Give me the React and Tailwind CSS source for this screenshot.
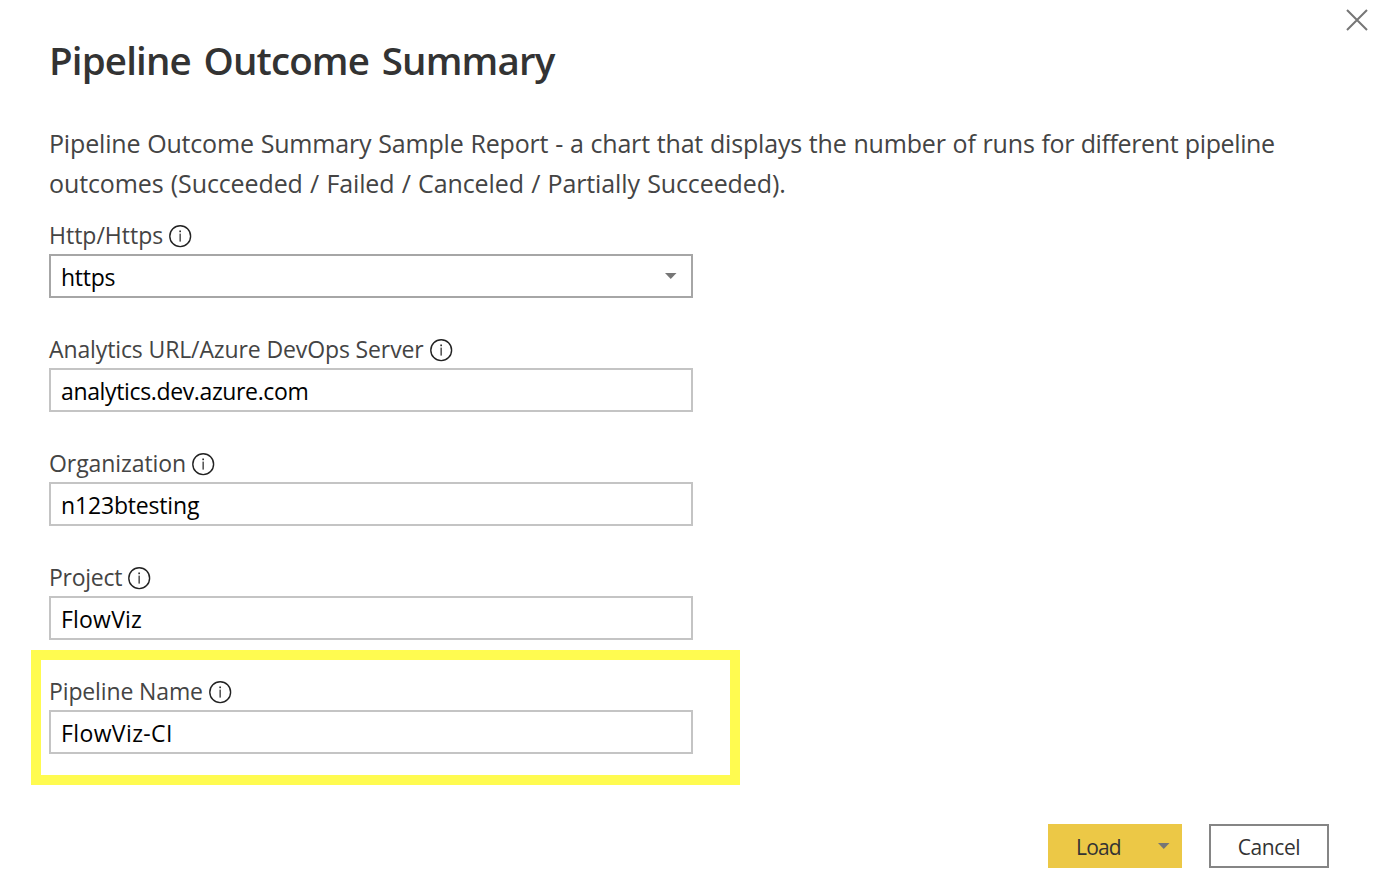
import React from "react";

function InfoIcon() {
  return (
    <svg width="24" height="24" viewBox="0 0 24 24" fill="none" className="shrink-0">
      <circle cx="12.2" cy="12.2" r="10.4" stroke="#222222" strokeWidth="1.4" />
      <rect x="11.5" y="9.6" width="1.3" height="8" fill="#333333" />
      <rect x="11.3" y="6.5" width="1.7" height="1.7" fill="#333333" />
    </svg>
  );
}

function Caret() {
  return (
    <svg width="12" height="6" viewBox="0 0 12 6" className="shrink-0">
      <path d="M0 0H11.5L5.75 6Z" fill="#767676" />
    </svg>
  );
}

function Field({ label, value, select, highlighted, labelClass = "", valueClass = "" }) {
  return (
    <div className="relative flex h-[114px] w-[644px] flex-col">
      {highlighted && (
        <div className="absolute -left-[18px] -top-[33px] h-[135px] w-[709px] border-[10px] border-[#fffb50]" />
      )}
      <div className="flex h-[18px] items-center gap-[5px] whitespace-nowrap text-[23px] text-[#444444]">
        <span className={`relative -top-px ${labelClass}`}>{label}</span>
        <InfoIcon />
      </div>
      <div
        className={`mt-[9px] flex h-11 items-center justify-between border-2 pl-[10px] pr-[14px] text-[23px] text-black ${
          select ? "border-[#a6a6a6]" : "border-[#c4c4c4]"
        }`}
      >
        <span className={`relative top-px ${valueClass}`}>{value}</span>
        {select && <Caret />}
      </div>
    </div>
  );
}

export default function App() {
  return (
    <div className="flex h-[892px] w-[1384px] flex-col overflow-hidden bg-white font-['Open_Sans','Noto_Sans',sans-serif]">
      <header className="flex h-[123px] justify-between pl-[49px] pr-4">
        <h1 className="mt-[33px] whitespace-nowrap text-[38.5px] font-semibold leading-[54px] tracking-[-0.85px] text-[#333333] [word-spacing:3.5px]">
          Pipeline Outcome Summary
        </h1>
        <button aria-label="Close" className="mt-[9px] h-[22px] w-[22px]">
          <svg width="22" height="22" viewBox="0 0 22 22" fill="none">
            <path d="M1 1L21 21M21 1L1 21" stroke="#767676" strokeWidth="2" />
          </svg>
        </button>
      </header>
      <p className="h-[104px] whitespace-nowrap pl-[49px] text-[25px] leading-10 text-[#444444]">
        <span className="tracking-[-0.17px] [word-spacing:0.5px]">Pipeline Outcome Summary Sample Report - a chart that displays the number of runs </span>
        <span className="tracking-[-0.38px] [word-spacing:0.5px]">for different pipeline</span>
        <br />
        <span className="tracking-[-0.11px] [word-spacing:0.9px]">outcomes (Succeeded / Failed / Canceled / Partially Succeeded).</span>
      </p>
      <main className="flex h-[597px] flex-col pl-[49px]">
        <Field label="Http/Https" value="https" valueClass="tracking-[-0.25px]" select />
        <Field
          label="Analytics URL/Azure DevOps Server"
          value="analytics.dev.azure.com"
          labelClass="tracking-[-0.12px]"
          valueClass="tracking-[-0.36px]"
        />
        <Field
          label="Organization"
          value="n123btesting"
          labelClass="tracking-[-0.08px]"
          valueClass="tracking-[-0.17px]"
        />
        <Field label="Project" value="FlowViz" labelClass="tracking-[-0.28px]" valueClass="tracking-[0.2px]" />
        <Field
          label="Pipeline Name"
          value="FlowViz-CI"
          labelClass="tracking-[-0.13px]"
          valueClass="tracking-[0.38px]"
          highlighted
        />
      </main>
      <footer className="flex justify-end gap-[27px] pr-[55px] text-[21px] text-[#333333]">
        <button className="flex h-11 w-[134px] items-center justify-between bg-[#ecc846] pl-7 pr-3">
          <span className="relative top-[2px] tracking-[-0.8px]">Load</span>
          <Caret />
        </button>
        <button className="flex h-11 w-[120px] items-center justify-center border-2 border-[#858585] bg-white">
          <span className="relative top-[2px] tracking-[-0.4px]">Cancel</span>
        </button>
      </footer>
    </div>
  );
}
